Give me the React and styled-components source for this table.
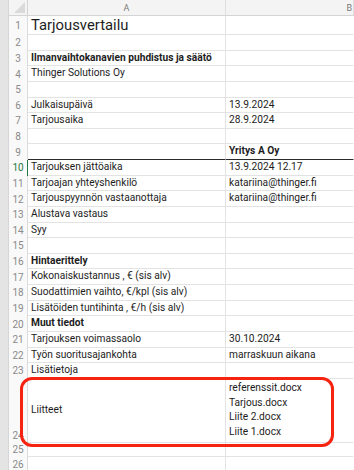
import styled, { createGlobalStyle } from "styled-components";

const GlobalStyle = createGlobalStyle`
  html, body {
    margin: 0;
    padding: 0;
    background: #ffffff;
    overflow: hidden;
  }
  body {
    font-family: Roboto, "Liberation Sans", Arial, sans-serif;
    color: #1d1d1d;
  }
`;

/* ---------------- STYLES ---------------- */

const Page = styled.div`
  position: relative;
  display: flex;
  width: 354px;
  height: 470px;
  overflow: hidden;
`;

const LeftStrip = styled.div`
  width: 8px;
  flex-shrink: 0;
  background: #e4e4e4;
  border-right: 1px solid #d6d6d6;
`;

const Sheet = styled.div`
  flex: 1;
  display: flex;
  flex-direction: column;
  min-width: 0;
`;

const Row = styled.div`
  display: grid;
  grid-template-columns: 19px 198px 1fr;
  height: ${({ h }) => h}px;
  flex-shrink: 0;
`;

const Corner = styled.div`
  background: #f4f4f4;
  border-bottom: 1px solid #d4d4d4;
  border-right: 1px solid #d4d4d4;
  display: flex;
  align-items: flex-end;
  justify-content: flex-end;
  padding: 0 2px 2px 0;
  box-sizing: border-box;
`;

const ColHead = styled.div`
  background: #f4f4f4;
  border-bottom: 1px solid #d4d4d4;
  border-right: 1px solid #dedede;
  font-size: 9px;
  color: #7a7a7a;
  display: flex;
  align-items: center;
  justify-content: ${({ edge }) => (edge ? "flex-end" : "center")};
  padding-right: ${({ edge }) => (edge ? "1px" : "0")};
  box-sizing: border-box;
`;

const RowNum = styled.div`
  background: #f9f9f9;
  border-right: 1px solid ${({ active }) => (active ? "#1f7a45" : "#dcdcdc")};
  font-size: 10px;
  color: ${({ active }) => (active ? "#1f7a45" : "#8a8a8a")};
  display: flex;
  align-items: ${({ bottom }) => (bottom ? "flex-end" : "center")};
  justify-content: center;
  padding-bottom: ${({ bottom }) => (bottom ? "2px" : "0")};
  box-sizing: border-box;
`;

const Cell = styled.div`
  border-bottom: 1px solid ${({ dark }) => (dark ? "#2a2a2a" : "#e3e3e3")};
  border-right: 1px solid ${({ last }) => (last ? "transparent" : "#e3e3e3")};
  font-size: ${({ big }) => (big ? "14.8px" : "10.2px")};
  font-weight: ${({ bold }) => (bold ? 700 : 400)};
  padding-left: 3px;
  display: flex;
  flex-direction: column;
  justify-content: center;
  white-space: nowrap;
  overflow: visible;
  box-sizing: border-box;
  line-height: 14.5px;
  min-width: 0;
  position: relative;
  z-index: ${({ spill }) => (spill ? 1 : 0)};
`;

const Highlight = styled.div`
  position: absolute;
  left: 20px;
  top: 377px;
  width: 314px;
  height: 70px;
  border: 3px solid #f5230f;
  border-radius: 12px;
  box-sizing: border-box;
  pointer-events: none;
`;

/* ---------------- DATA ---------------- */

const R = 15.64;

const rows = [
  { n: 1, a: "Tarjousvertailu", big: true, h: 19 },
  { n: 2 },
  { n: 3, a: "Ilmanvaihtokanavien puhdistus ja säätö", bold: true, spill: true },
  { n: 4, a: "Thinger Solutions Oy" },
  { n: 5 },
  { n: 6, a: "Julkaisupäivä", b: "13.9.2024" },
  { n: 7, a: "Tarjousaika", b: "28.9.2024" },
  { n: 8 },
  { n: 9, b: "Yritys A Oy", bBold: true, dark: true },
  { n: 10, a: "Tarjouksen jättöaika", b: "13.9.2024 12.17", active: true },
  { n: 11, a: "Tarjoajan yhteyshenkilö", b: "katariina@thinger.fi" },
  { n: 12, a: "Tarjouspyynnön vastaanottaja", b: "katariina@thinger.fi" },
  { n: 13, a: "Alustava vastaus" },
  { n: 14, a: "Syy" },
  { n: 15 },
  { n: 16, a: "Hintaerittely", bold: true },
  { n: 17, a: "Kokonaiskustannus , €  (sis alv)", spill: true },
  { n: 18, a: "Suodattimien vaihto, €/kpl (sis alv)", spill: true },
  { n: 19, a: "Lisätöiden tuntihinta , €/h (sis alv)", spill: true },
  { n: 20, a: "Muut tiedot", bold: true },
  { n: 21, a: "Tarjouksen voimassaolo", b: "30.10.2024" },
  { n: 22, a: "Työn suoritusajankohta", b: "marraskuun aikana" },
  { n: 23, a: "Lisätietoja" },
  {
    n: 24,
    a: "Liitteet",
    b: ["referenssit.docx", "Tarjous.docx", "Liite 2.docx", "Liite 1.docx"],
    h: 64,
    bottom: true,
  },
  { n: 25, h: 14 },
  { n: 26, h: 16 },
];

/* ---------------- COMPONENT ---------------- */

const CornerMark = () => (
  <svg width="11" height="11" viewBox="0 0 11 11">
    <path d="M11 0 L11 11 L0 11 Z" fill="#dadada" />
  </svg>
);

export default function App() {
  return (
    <>
      <GlobalStyle />
      <Page>
        <LeftStrip />
        <Sheet>
          <Row h={16}>
            <Corner>
              <CornerMark />
            </Corner>
            <ColHead>A</ColHead>
            <ColHead edge>B</ColHead>
          </Row>

          {rows.map((r) => (
            <Row key={r.n} h={r.h || R}>
              <RowNum active={r.active} bottom={r.bottom}>
                {r.n}
              </RowNum>
              <Cell big={r.big} bold={r.bold} dark={r.dark} spill={r.spill}>
                {r.a}
              </Cell>
              <Cell last bold={r.bBold} dark={r.dark}>
                {Array.isArray(r.b)
                  ? r.b.map((f) => <span key={f}>{f}</span>)
                  : r.b}
              </Cell>
            </Row>
          ))}
        </Sheet>
        <Highlight />
      </Page>
    </>
  );
}
